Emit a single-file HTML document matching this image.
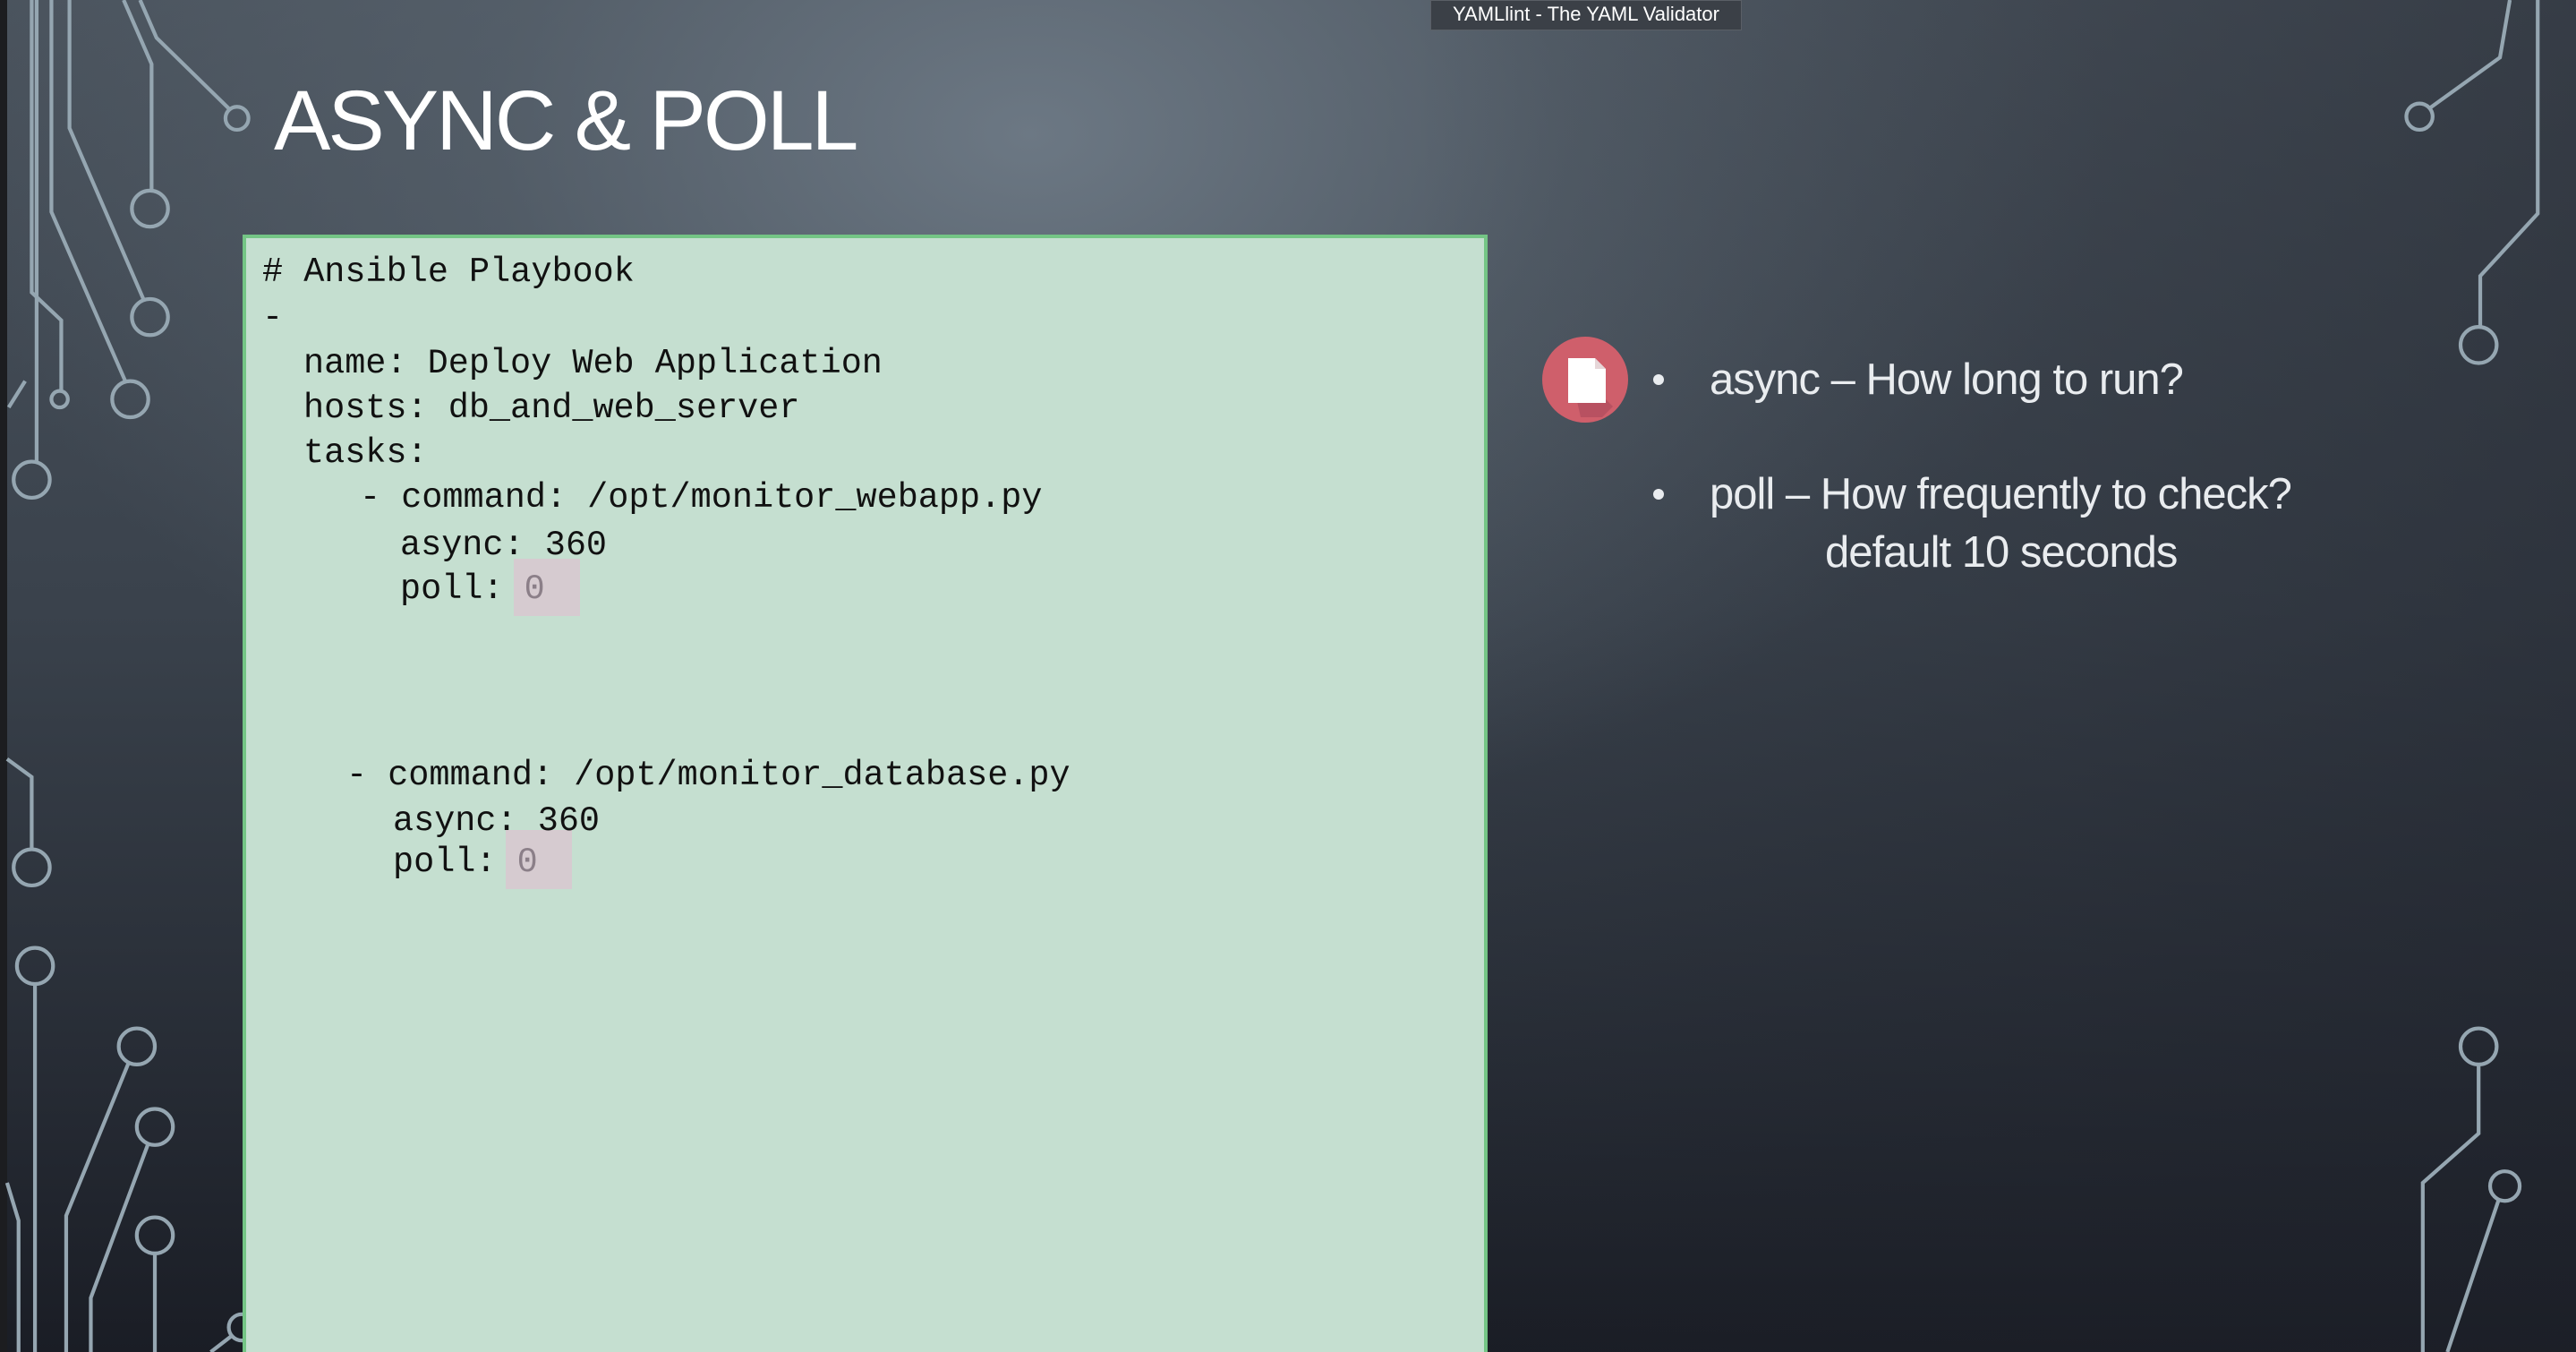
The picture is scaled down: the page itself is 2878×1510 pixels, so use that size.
<!DOCTYPE html>
<html><head><meta charset="utf-8"><style>
html,body{margin:0;padding:0;width:2878px;height:1510px;overflow:hidden}
body{position:relative;
background:
radial-gradient(ellipse 1500px 1000px at 1150px 150px, rgba(110,122,134,0.95) 0%, rgba(90,101,112,0.6) 40%, rgba(60,68,78,0) 80%),
linear-gradient(180deg,#4a535d 0%,#3a424c 45%,#262b34 80%,#1a1d25 100%);
font-family:"Liberation Sans",sans-serif;}
.rdark{position:absolute;right:0;top:0;width:1300px;height:1510px;background:linear-gradient(90deg,rgba(30,33,42,0) 0%,rgba(30,33,42,0.45) 100%)}
.lstrip{position:absolute;left:0;top:0;width:8px;height:1510px;background:#1c1d20}
svg.c{position:absolute;left:0;top:0}
.title{position:absolute;left:306px;top:88px;font-size:95px;color:#fff;letter-spacing:-3px;white-space:nowrap;line-height:1}
.box{position:absolute;left:271px;top:262px;width:1391px;height:1248px;background:#c5dfd0;border:4px solid #74c585;border-bottom:none;box-sizing:border-box}
.code{position:absolute;font-family:"Liberation Mono",monospace;font-size:38.5px;color:#111;white-space:pre;line-height:1}
.hl{position:absolute;background:#d6cbd0}
.zero{color:#8b7f88}
.txt{position:absolute;color:#e9ecef;font-size:49px;white-space:nowrap;line-height:1;letter-spacing:-1px}
.dot{position:absolute;width:12px;height:12px;border-radius:50%;background:#e9ecef}
.tip{position:absolute;left:1598px;top:0;width:348px;height:34px;background:#3b4047;border:1px solid #5a5f66;box-sizing:border-box;color:#fff;font-size:22px;line-height:30px;text-align:center}
</style></head><body>
<div class="rdark"></div>
<div class="lstrip"></div>
<svg class="c" width="2878" height="1510" viewBox="0 0 1568 823" fill="none" stroke="#95a6b1" stroke-width="2.3">
<path d="M85 0 L95 23 L139 66"/><circle cx="144" cy="72" r="7"/>
<path d="M75 0 L92 39 L92 116"/><circle cx="91" cy="127" r="11"/>
<path d="M42 0 L42 78 L87 182"/><circle cx="91" cy="193" r="11"/>
<path d="M31 0 L31 129 L76 232"/><circle cx="79" cy="243" r="11"/>
<path d="M19 0 L19 178 L37 195 L37 238"/><circle cx="36" cy="243" r="5"/>
<path d="M22 0 L22 281"/><circle cx="19" cy="292" r="11"/>
<path d="M5 248 L15 232"/>
<path d="M4 462 L19 473 L19 517"/><circle cx="19" cy="528" r="11"/>
<circle cx="21" cy="588" r="11"/><path d="M21 599 L21 823"/>
<circle cx="83" cy="637" r="11"/><path d="M78 647 L40 740 L40 823"/>
<circle cx="94" cy="686" r="11"/><path d="M90 696 L55 790 L55 823"/>
<circle cx="94" cy="752" r="11"/><path d="M94 763 L94 823"/>
<circle cx="147" cy="808" r="8"/><path d="M141 813 L128 823"/>
<path d="M4 720 L11 743 L11 823"/>
<path d="M1528 0 L1522 35 L1479 66"/><circle cx="1473" cy="71" r="8"/>
<path d="M1545 0 L1545 130 L1510 168 L1510 199"/><circle cx="1509" cy="210" r="11"/>
<circle cx="1509" cy="637" r="11"/><path d="M1509 648 L1509 690 L1475 720 L1475 823"/>
<circle cx="1525" cy="722" r="9"/><path d="M1521 731 L1490 823"/>
</svg>
<div class="title">ASYNC &amp; POLL</div>
<div class="box"></div>
<div class="hl" style="left:574px;top:624px;width:74px;height:64px"></div>
<div class="hl" style="left:565px;top:927px;width:74px;height:66px"></div>
<div class="code" style="left:293px;top:285px"># Ansible Playbook</div>
<div class="code" style="left:293px;top:336px">-</div>
<div class="code" style="left:339px;top:387px">name: Deploy Web Application</div>
<div class="code" style="left:339px;top:437px">hosts: db_and_web_server</div>
<div class="code" style="left:339px;top:487px">tasks:</div>
<div class="code" style="left:402px;top:537px">- command: /opt/monitor_webapp.py</div>
<div class="code" style="left:447px;top:590px">async: 360</div>
<div class="code" style="left:447px;top:639px">poll: <span class="zero">0</span></div>
<div class="code" style="left:387px;top:847px">- command: /opt/monitor_database.py</div>
<div class="code" style="left:439px;top:898px">async: 360</div>
<div class="code" style="left:439px;top:944px">poll: <span class="zero">0</span></div>
<svg class="c" width="2878" height="1510">
<circle cx="1771" cy="424" r="48" fill="#cf5f6b"/>
<path d="M1752 404 L1802 454 L1790 466 L1766 466 Z" fill="#a8485a" opacity="0.6"/>
<path d="M1752 400 L1782 400 L1794 412 L1794 450 L1752 450 Z" fill="#fff"/>
<path d="M1782 400 L1782 412 L1794 412" fill="#e6d6d8"/>
</svg>
<div class="dot" style="left:1847px;top:418px"></div>
<div class="txt" style="left:1910px;top:400px">async – How long to run?</div>
<div class="dot" style="left:1847px;top:546px"></div>
<div class="txt" style="left:1910px;top:528px">poll – How frequently to check?</div>
<div class="txt" style="left:2039px;top:593px">default 10 seconds</div>
<div class="tip">YAMLlint - The YAML Validator</div>
</body></html>
